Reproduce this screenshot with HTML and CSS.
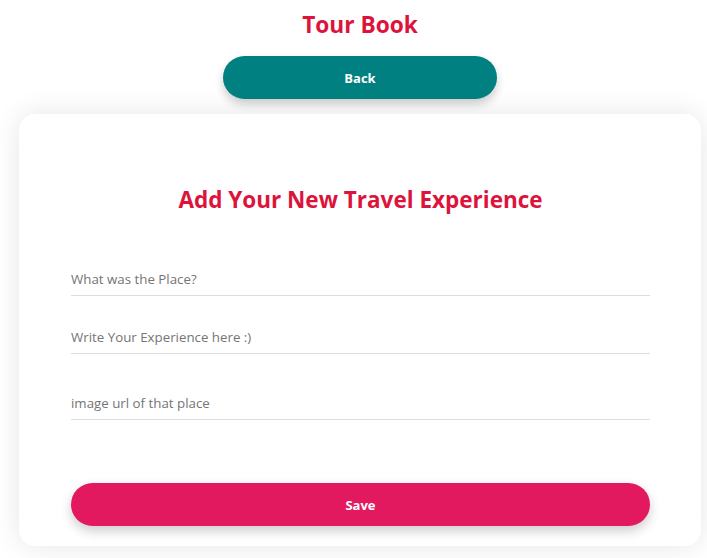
FILE: index.html
```html
<!DOCTYPE html>
<html lang="en">
<head>
<meta charset="utf-8">
<title>Tour Book</title>
<link rel="stylesheet" href="styles.css">
</head>
<body>
<div class="page">
  <h1 class="title">Tour Book</h1>
  <button class="btn btn-back" type="button">Back</button>
  <form class="card">
    <h2 class="card-title">Add Your New Travel Experience</h2>
    <input class="field field-place" type="text" placeholder="What was the Place?">
    <input class="field field-exp" type="text" placeholder="Write Your Experience here :)">
    <input class="field field-img" type="text" placeholder="image url of that place">
    <button class="btn btn-save" type="button">Save</button>
  </form>
</div>
</body>
</html>
```

FILE: styles.css
```css
* { box-sizing: border-box; }
body {
  margin: 0;
  background: #ffffff;
  font-family: "Open Sans", "Noto Sans", "Liberation Sans", sans-serif;
}
.page {
  padding: 0 6px 12px 19px;
  display: flex;
  flex-direction: column;
  align-items: center;
}
.title {
  margin: 9px 0 0;
  font-size: 22.7px;
  line-height: 32px;
  font-weight: 700;
  color: #dc143c;
}
.btn {
  border: none;
  border-radius: 22px;
  color: #ffffff;
  font-family: inherit;
  font-weight: 700;
  font-size: 13px;
  height: 43px;
  cursor: pointer;
}
.btn-back {
  margin-top: 15px;
  width: 274px;
  background: #008080;
  box-shadow: 0 5px 10px rgba(0, 0, 0, 0.2);
}
.card {
  margin-top: 15px;
  align-self: stretch;
  background: #ffffff;
  border-radius: 16px;
  box-shadow: 0 0 28px rgba(0, 0, 0, 0.1);
  padding: 70px 51px 20px 52px;
  display: flex;
  flex-direction: column;
}
.card-title {
  margin: 0;
  text-align: center;
  font-size: 22.5px;
  line-height: 32px;
  font-weight: 700;
  color: #dc143c;
}
.field {
  height: 32px;
  border: none;
  border-bottom: 1px solid #dddddd;
  padding: 0 0 2px;
  font-family: inherit;
  font-size: 13.3px;
  color: #333;
  outline: none;
  background: transparent;
}
.field::placeholder { color: #757575; }
.field-place { margin-top: 48px; }
.field-exp { margin-top: 26px; }
.field-img { margin-top: 34px; }
.btn-save {
  margin-top: 63px;
  width: 100%;
  background: #e3195f;
  box-shadow: 0 5px 12px rgba(0, 0, 0, 0.2);
}
```
